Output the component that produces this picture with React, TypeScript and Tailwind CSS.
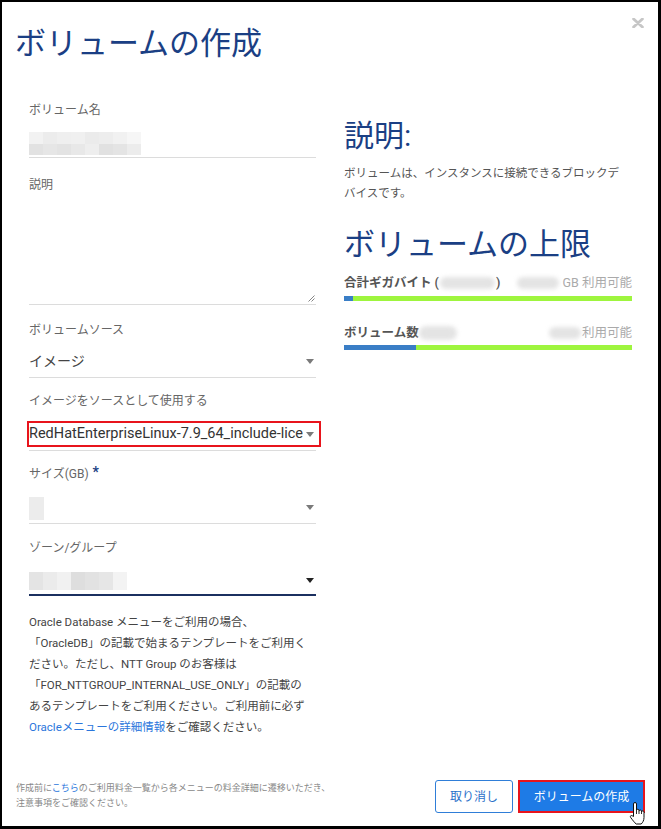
import React from 'react';

const FONT = "font-['Roboto','Noto_Sans_CJK_JP',sans-serif]";

// pixelated (mosaic) placeholders for masked values
const nameCells = [
  ['bg-[#f2f2f2]', 'bg-[#ececec]', 'bg-[#efefef]', 'bg-[#f0f0f0]', 'bg-[#ebebeb]', 'bg-[#ededed]', 'bg-[#f1f1f1]', 'bg-[#f6f6f6]'],
  ['bg-[#e2e2e2]', 'bg-[#e6e6e6]', 'bg-[#e3e3e3]', 'bg-[#e8e8e8]', 'bg-[#eeeeee]', 'bg-[#e1e1e1]', 'bg-[#e4e4e4]', 'bg-[#ececec]'],
];
const zoneCells = [
  ['bg-[#e4e4e4]', 'bg-[#ebebeb]', 'bg-[#f1f1f1]', 'bg-[#dedede]', 'bg-[#e2e2e2]', 'bg-[#e6e6e6]', 'bg-[#f3f3f3]'],
];

function Pixels({ rows, cell }: { rows: string[][]; cell: string }) {
  return (
    <div className="flex flex-col">
      {rows.map((r, i) => (
        <div key={i} className="flex">
          {r.map((c, j) => (
            <div key={j} className={`${cell} ${c}`} />
          ))}
        </div>
      ))}
    </div>
  );
}

function Caret({ dark }: { dark?: boolean }) {
  return (
    <svg width="8" height="5" viewBox="0 0 8 5" className="shrink-0">
      <path d="M0 0h8L4 5z" fill={dark ? '#222' : '#7a7a7a'} />
    </svg>
  );
}

function Label({ children, className = '' }: { children: React.ReactNode; className?: string }) {
  return <div className={`h-4 text-[12px] leading-4 text-[#666] ${className}`}>{children}</div>;
}

function Smudge({ className }: { className: string }) {
  return <span className={`inline-block rounded-full bg-[#e4e4e4] blur-[2px] ${className}`} />;
}

export default function App() {
  return (
    <div className="w-[661px] h-[829px] bg-black pt-[2px] pl-[2px] pr-[3px] pb-[3px]">
      <div className={`relative h-full bg-white flex flex-col ${FONT}`}>
        {/* Header */}
        <div className="flex justify-between items-start pl-[13px] pr-[14px]">
          <h1 className="mt-[24px] text-[31px] leading-[36px] text-[#1b3f84]">ボリュームの作成</h1>
          <button className="mt-[16px]" aria-label="close">
            <svg width="12" height="10" viewBox="0 0 12 10">
              <path d="M1.6 1L10.4 9M10.4 1L1.6 9" stroke="#c6c6c6" strokeWidth="2.8" strokeLinecap="round" />
            </svg>
          </button>
        </div>

        {/* Body */}
        <div className="flex pl-[27px] pr-[26px] gap-[28px]">
          {/* Form */}
          <div className="w-[287px] flex flex-col">
            <Label className="mt-[40px]">ボリューム名</Label>
            <div className="h-[40px] flex items-end pb-[2px] border-b border-[#dcdcdc]">
              <Pixels rows={nameCells} cell="w-[14px] h-[11.5px]" />
            </div>

            <Label className="mt-[19px]">説明</Label>
            <div className="relative h-[112px] border-b border-[#dcdcdc]">
              <svg width="7" height="7" viewBox="0 0 7 7" className="absolute right-[1px] bottom-[2px]">
                <path d="M0.5 6.5L6.5 0.5M3.5 6.5L6.5 3.5" stroke="#777" strokeWidth="0.9" />
              </svg>
            </div>

            <Label className="mt-[17px]">ボリュームソース</Label>
            <div className="h-[40px] pt-2 flex items-center justify-between pr-[2px] border-b border-[#dcdcdc]">
              <span className="text-[14px] text-[#444]">イメージ</span>
              <Caret />
            </div>

            <Label className="mt-[15px]">イメージをソースとして使用する</Label>
            <div className="pt-[12px] pb-[3px] border-b border-[#dcdcdc]">
              <div className="h-[26px] -ml-[2px] -mr-[5px] border-2 border-[#e8141c] flex items-center pr-[5px]">
                <span className="w-[274px] overflow-hidden whitespace-nowrap text-[14.5px] text-[#333] leading-[20px]">
                  RedHatEnterpriseLinux-7.9_64_include-license
                </span>
                <span className="ml-auto">
                  <Caret />
                </span>
              </div>
            </div>

            <Label className="mt-[15px]">
              サイズ(GB)
              <span className="ml-[4px] align-top text-[14px] leading-3 font-bold text-[#1b3f84]">*</span>
            </Label>
            <div className="h-[42px] pt-[15px] flex items-start justify-between pr-[2px] border-b border-[#dcdcdc]">
              <div className="w-[15px] h-[23px] bg-[#ececec]" />
              <div className="mt-[8px]">
                <Caret />
              </div>
            </div>

            <Label className="mt-[16px]">ゾーン/グループ</Label>
            <div className="h-[40px] pt-[16px] flex items-start justify-between pr-[2px] border-b-2 border-[#1b3060]">
              <Pixels rows={zoneCells} cell="w-[14px] h-[18px]" />
              <div className="mt-[6px]">
                <Caret dark />
              </div>
            </div>

            <p className="mt-[16px] text-[11.5px] leading-[21px] text-[#444] whitespace-nowrap">
              Oracle Database メニューをご利用の場合、
              <br />
              「OracleDB」の記載で始まるテンプレートをご利用く
              <br />
              ださい。ただし、NTT Group のお客様は
              <br />
              「FOR_NTTGROUP_INTERNAL_USE_ONLY」の記載の
              <br />
              あるテンプレートをご利用ください。ご利用前に必ず
              <br />
              <a className="text-[#2a76dc]">Oracleメニューの詳細情報</a>をご確認ください。
            </p>
          </div>

          {/* Info */}
          <div className="w-[288px] flex flex-col">
            <h2 className="mt-[56px] text-[30px] leading-[36px] text-[#1b3f84]">説明:</h2>
            <p className="mt-[9px] text-[11.5px] leading-[20px] text-[#555] whitespace-nowrap">
              ボリュームは、インスタンスに接続できるブロックデ
              <br />
              バイスです。
            </p>

            <h2 className="mt-[24px] text-[31px] leading-[36px] text-[#1b3f84]">ボリュームの上限</h2>

            <div className="mt-[11px] h-[18px] flex items-center justify-between text-[12.5px]">
              <span className="flex items-center font-semibold text-[#555]">
                合計ギガバイト (
                <Smudge className="w-[55px] h-[12px] mx-[1px]" />)
              </span>
              <span className="flex items-center text-[#aaa]">
                <Smudge className="w-[42px] h-[12px] mr-[4px]" />
                GB 利用可能
              </span>
            </div>
            <div className="mt-[4px] h-[5px] flex">
              <div className="w-[9px] bg-[#3a7ec6]" />
              <div className="flex-1 bg-[#9ef53e]" />
            </div>

            <div className="mt-[23px] h-[18px] flex items-center justify-between text-[12.5px]">
              <span className="flex items-center font-semibold text-[#555]">
                ボリューム数
                <Smudge className="w-[38px] h-[14px]" />
              </span>
              <span className="flex items-center text-[#aaa]">
                <Smudge className="w-[32px] h-[12px] mr-[1px]" />
                利用可能
              </span>
            </div>
            <div className="mt-[3px] h-[5px] flex">
              <div className="w-[72px] bg-[#3a7ec6]" />
              <div className="flex-1 bg-[#9ef53e]" />
            </div>
          </div>
        </div>

        {/* Footer */}
        <div className="mt-auto flex justify-between items-center pl-[14px] pr-[15px] pb-[13px]">
          <p className="text-[9px] leading-[15px] text-[#888] whitespace-nowrap -mt-[2px]">
            作成前に<a className="text-[#2a76dc]">こちら</a>のご利用料金一覧から各メニューの料金詳細に遷移いただき、
            <br />
            注意事項をご確認ください。
          </p>
          <div className="flex items-center gap-[7px]">
            <button className="w-[78px] h-[33px] rounded-[3px] border border-[#2f7ed8] bg-white text-[12px] text-[#2a6fc9]">
              取り消し
            </button>
            <button className="w-[123px] h-[29px] bg-[#1e7be6] text-[12px] text-white outline-2 outline-[#e8141c]">
              ボリュームの作成
            </button>
          </div>
        </div>

        {/* mouse cursor */}
        <svg width="17" height="23" viewBox="0 0 17 23" className="absolute left-[627px] top-[800px]">
          <path
            d="M4.5 2a1.5 1.5 0 0 1 3 0V8.5a1.25 1.25 0 0 1 2.5 0V9.3a1.25 1.25 0 0 1 2.5 0V10.1a1.25 1.25 0 0 1 2.5 0V15.5c0 3-1.3 5-2.8 6.5H7.2c-1.6-1.2-3.6-4-5.6-6.6c-0.8-1.1 0.3-2.4 1.5-1.7L4.5 14.5Z"
            fill="#fff"
            stroke="#111"
            strokeWidth="1"
            strokeLinejoin="round"
          />
          <path d="M7.5 8.5V12M10 9.3V12M12.5 10.1V12" stroke="#111" strokeWidth="0.9" />
        </svg>
      </div>
    </div>
  );
}
